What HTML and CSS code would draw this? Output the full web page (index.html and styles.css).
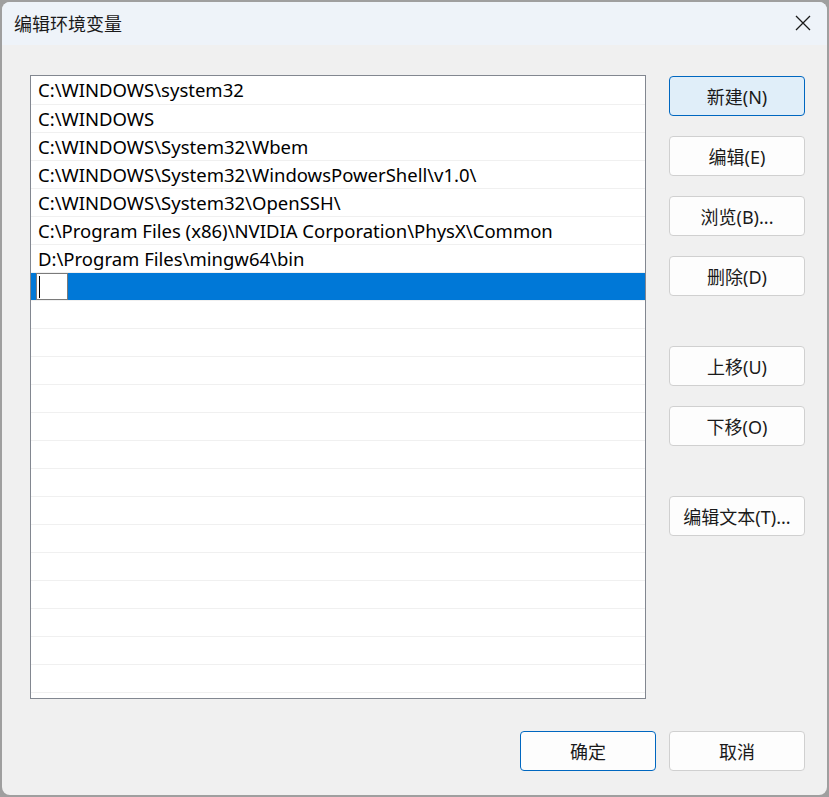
FILE: index.html
```html
<!DOCTYPE html>
<html lang="zh-CN">
<head>
    <meta charset="UTF-8">
    <title>编辑环境变量</title>
    <link rel="stylesheet" href="styles.css">
</head>
<body>
    <div class="window">
        <!-- 标题栏 -->
        <div class="title-bar">
            <div class="title">编辑环境变量</div>
            <div class="close-btn">
                <svg width="16" height="16" viewBox="0 0 16 16">
                    <path d="M1 1 L15 15 M15 1 L1 15" stroke="#1a1a1a" stroke-width="1.3" fill="none"/>
                </svg>
            </div>
        </div>

        <div class="content">
            <div class="main-row">
                <!-- 路径列表 -->
                <div class="path-list">
                    <div class="path-row">C:\WINDOWS\system32</div>
                    <div class="path-row">C:\WINDOWS</div>
                    <div class="path-row">C:\WINDOWS\System32\Wbem</div>
                    <div class="path-row">C:\WINDOWS\System32\WindowsPowerShell\v1.0\</div>
                    <div class="path-row">C:\WINDOWS\System32\OpenSSH\</div>
                    <div class="path-row">C:\Program Files (x86)\NVIDIA Corporation\PhysX\Common</div>
                    <div class="path-row">D:\Program Files\mingw64\bin</div>
                    <div class="path-row selected">
                        <div class="edit-box"><span class="caret"></span></div>
                    </div>
                    <div class="path-row"></div>
                    <div class="path-row"></div>
                    <div class="path-row"></div>
                    <div class="path-row"></div>
                    <div class="path-row"></div>
                    <div class="path-row"></div>
                    <div class="path-row"></div>
                    <div class="path-row"></div>
                    <div class="path-row"></div>
                    <div class="path-row"></div>
                    <div class="path-row"></div>
                    <div class="path-row"></div>
                    <div class="path-row"></div>
                    <div class="path-row"></div>
                    <div class="path-row"></div>
                </div>

                <!-- 右侧按钮 -->
                <div class="side-buttons">
                    <div class="btn default">新建(N)</div>
                    <div class="btn">编辑(E)</div>
                    <div class="btn">浏览(B)...</div>
                    <div class="btn">删除(D)</div>
                    <div class="btn group-start">上移(U)</div>
                    <div class="btn">下移(O)</div>
                    <div class="btn group-start">编辑文本(T)...</div>
                </div>
            </div>

            <!-- 底部按钮 -->
            <div class="footer">
                <div class="btn ok">确定</div>
                <div class="btn">取消</div>
            </div>
        </div>
    </div>
</body>
</html>
```

FILE: styles.css
```css
* {
    box-sizing: border-box;
    font-family: "Noto Sans", "Noto Sans CJK SC", sans-serif;
}

body {
    margin: 0;
    padding: 2px 2px 0 2px;
    background: #9f9f9f;
    height: 797px;
    overflow: hidden;
}

.window {
    width: 825px;
    height: 793px;
    background: #f0f0f0;
    border-radius: 8px;
    overflow: hidden;
    display: flex;
    flex-direction: column;
}

.title-bar {
    height: 43px;
    background: #eef3f9;
    display: flex;
    align-items: center;
    justify-content: space-between;
    padding: 0 16px 0 12px;
}

.title {
    font-family: "Noto Sans CJK SC", sans-serif;
    font-size: 18px;
    color: #1a1a1a;
    margin-top: -2px;
}

.close-btn {
    width: 16px;
    height: 16px;
    margin-top: -1px;
}

.close-btn svg {
    display: block;
}

.content {
    flex: 1;
    padding: 30px 22px 0 28px;
    display: flex;
    flex-direction: column;
}

.main-row {
    display: flex;
    gap: 23px;
}

.path-list {
    width: 616px;
    height: 624px;
    background: #fff;
    border: 1px solid #828790;
    overflow: hidden;
}

.path-row {
    height: 28px;
    border-bottom: 1px solid #f0f0f0;
    padding: 0 0 0 7px;
    font-size: 18.5px;
    line-height: 28px;
    color: #000;
    white-space: nowrap;
}

.path-row:first-child {
    height: 29px;
}

.path-row.selected {
    background: #0078d7;
    padding-left: 5px;
    padding-top: 0;
}

.edit-box {
    width: 32px;
    height: 27px;
    background: #fff;
    border: 1px solid #7a7a7a;
    padding: 2px 0 0 2px;
}

.caret {
    display: block;
    width: 1px;
    height: 22px;
    background: #000;
}

.side-buttons {
    display: flex;
    flex-direction: column;
    gap: 20px;
    padding-top: 1px;
}

.btn {
    width: 136px;
    height: 40px;
    background: #fdfdfd;
    border: 1px solid #d0d0d0;
    border-radius: 4px;
    display: flex;
    align-items: center;
    justify-content: center;
    font-size: 18px;
    color: #1a1a1a;
}

.btn.default {
    background: #e0eef9;
    border-color: #0067c0;
}

.btn.group-start {
    margin-top: 30px;
}

.footer {
    display: flex;
    justify-content: flex-end;
    gap: 13px;
    margin-top: 32px;
}

.btn.ok {
    border-color: #0067c0;
}
```
